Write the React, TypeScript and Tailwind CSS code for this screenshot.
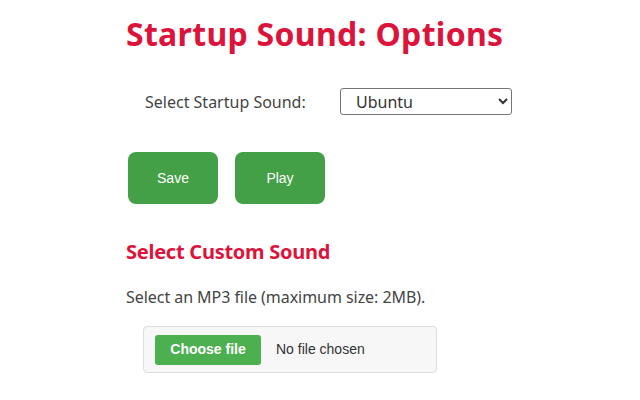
import { useState } from "react";

export default function App() {
  const [sound, setSound] = useState("Ubuntu");

  return (
    <div className="min-h-[400px] w-full bg-white" style={{ fontFamily: '"Noto Sans", "Open Sans", sans-serif' }}>
      <div className="mx-auto w-[388px] pt-[14px]">
        <h1 className="text-[32px] font-bold leading-[40px] tracking-[0.3px] text-[#dc143c]">Startup Sound: Options</h1>

        <div className="mt-[34px] flex items-center pl-[19px]">
          <label className="w-[195px] text-[16px] text-[#444]">Select Startup Sound:</label>
          <select
            value={sound}
            onChange={(e) => setSound(e.target.value)}
            className="h-[27px] w-[172px] rounded-[3px] border border-[#767676] bg-white pl-[11px] text-[16px] text-[#333]"
          >
            <option>Ubuntu</option>
            <option>Windows XP</option>
            <option>Windows 7</option>
            <option>macOS</option>
          </select>
        </div>

        <div className="mt-[37px] flex gap-[17px] pl-[2px]">
          <button className="h-[52px] w-[90px] rounded-[8px] bg-[#43a047] text-[14px] text-white" style={{ fontFamily: '"Liberation Sans", Arial, sans-serif' }}>
            Save
          </button>
          <button className="h-[52px] w-[90px] rounded-[8px] bg-[#43a047] text-[14px] text-white" style={{ fontFamily: '"Liberation Sans", Arial, sans-serif' }}>
            Play
          </button>
        </div>

        <h2 className="mt-[34px] text-[20px] font-bold leading-[28px] tracking-[-0.25px] text-[#dc143c]">Select Custom Sound</h2>

        <p className="mt-[19px] text-[16px] leading-[24px] tracking-[-0.05px] text-[#444]">Select an MP3 file (maximum size: 2MB).</p>

        <div className="ml-[17px] mt-[17px] flex h-[47px] w-[294px] items-center rounded-[4px] border border-[#dddddd] bg-[#f7f7f7] pl-[11px]" style={{ fontFamily: '"Liberation Sans", Arial, sans-serif' }}>
          <span className="flex h-[30px] w-[106px] items-center justify-center rounded-[3px] bg-[#4caf50] text-[14px] font-bold text-white">
            Choose file
          </span>
          <span className="ml-[15px] text-[14px] text-[#333]">No file chosen</span>
        </div>
      </div>
    </div>
  );
}
